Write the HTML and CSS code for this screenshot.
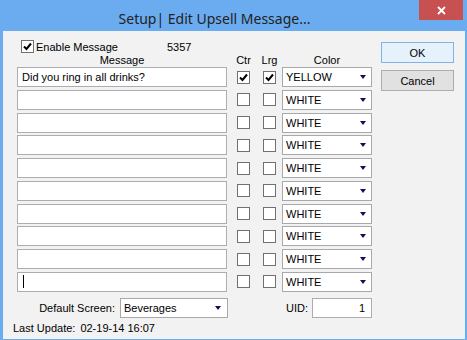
FILE: index.html
```html
<!DOCTYPE html>
<html>
<head>
  <title>Setup| Edit Upsell Message...</title>
  <link rel="stylesheet" href="styles.css">
</head>
<body>
<div class="window">
  <div class="titlebar">
    <div class="title">Setup| Edit Upsell Message...</div>
    <div class="close">
      <svg width="9" height="9" viewBox="0 0 9 9"><path d="M1 1 L8 8 M8 1 L1 8" stroke="#fff" stroke-width="1.8"/></svg>
    </div>
  </div>
  <div class="client">
    <div class="form">
      <div class="enable">
        <span class="chk checked"><svg width="11" height="11" viewBox="0 0 11 11"><path d="M2 5.5 L4.5 8 L9 2.5" fill="none" stroke="#000" stroke-width="2"/></svg></span>
        <span class="enable-label">Enable Message</span>
        <span>5357</span>
      </div>
      <div class="heads">
        <span class="col-msg">Message</span>
        <span class="col-ctr">Ctr</span>
        <span class="col-lrg">Lrg</span>
        <span class="col-color">Color</span>
      </div>
      <div class="rows">
        <div class="row">
          <div class="text col-msg">Did you ring in all drinks?</div>
          <span class="chk col-ctr"><svg width="11" height="11" viewBox="0 0 11 11"><path d="M2 5.5 L4.5 8 L9 2.5" fill="none" stroke="#000" stroke-width="2"/></svg></span>
          <span class="chk col-lrg"><svg width="11" height="11" viewBox="0 0 11 11"><path d="M2 5.5 L4.5 8 L9 2.5" fill="none" stroke="#000" stroke-width="2"/></svg></span>
          <div class="combo col-color">YELLOW<span class="arrow"></span></div>
        </div>
        <div class="row">
          <div class="text col-msg"></div>
          <span class="chk col-ctr"></span>
          <span class="chk col-lrg"></span>
          <div class="combo col-color">WHITE<span class="arrow"></span></div>
        </div>
        <div class="row">
          <div class="text col-msg"></div>
          <span class="chk col-ctr"></span>
          <span class="chk col-lrg"></span>
          <div class="combo col-color">WHITE<span class="arrow"></span></div>
        </div>
        <div class="row">
          <div class="text col-msg"></div>
          <span class="chk col-ctr"></span>
          <span class="chk col-lrg"></span>
          <div class="combo col-color">WHITE<span class="arrow"></span></div>
        </div>
        <div class="row">
          <div class="text col-msg"></div>
          <span class="chk col-ctr"></span>
          <span class="chk col-lrg"></span>
          <div class="combo col-color">WHITE<span class="arrow"></span></div>
        </div>
        <div class="row">
          <div class="text col-msg"></div>
          <span class="chk col-ctr"></span>
          <span class="chk col-lrg"></span>
          <div class="combo col-color">WHITE<span class="arrow"></span></div>
        </div>
        <div class="row">
          <div class="text col-msg"></div>
          <span class="chk col-ctr"></span>
          <span class="chk col-lrg"></span>
          <div class="combo col-color">WHITE<span class="arrow"></span></div>
        </div>
        <div class="row">
          <div class="text col-msg"></div>
          <span class="chk col-ctr"></span>
          <span class="chk col-lrg"></span>
          <div class="combo col-color">WHITE<span class="arrow"></span></div>
        </div>
        <div class="row">
          <div class="text col-msg"></div>
          <span class="chk col-ctr"></span>
          <span class="chk col-lrg"></span>
          <div class="combo col-color">WHITE<span class="arrow"></span></div>
        </div>
        <div class="row">
          <div class="text col-msg"><span class="caret"></span></div>
          <span class="chk col-ctr"></span>
          <span class="chk col-lrg"></span>
          <div class="combo col-color">WHITE<span class="arrow"></span></div>
        </div>
      </div>
      <div class="bottom">
        <span class="screen-label">Default Screen:</span>
        <div class="combo screen">Beverages<span class="arrow"></span></div>
        <div class="uid">
          <span class="uid-label">UID:</span>
          <div class="text uid-box">1</div>
        </div>
      </div>
      <div class="updated">Last Update:<span class="stamp">02-19-14 16:07</span></div>
    </div>
    <div class="buttons">
      <div class="btn ok">OK</div>
      <div class="btn">Cancel</div>
    </div>
  </div>
</div>
</body>
</html>
```

FILE: styles.css
```css
body {
    margin: 0;
    font-family: "Liberation Sans", Arial, sans-serif;
    font-size: 11px;
    color: #000;
}

.window {
    width: 467px;
    height: 340px;
    background-color: #6babf0;
    display: flex;
    flex-direction: column;
}

.titlebar {
    height: 31px;
    display: flex;
    flex-shrink: 0;
}

.title {
    flex: 1;
    padding-left: 10px;
    text-align: center;
    font-family: "Noto Sans", sans-serif;
    font-size: 14px;
    line-height: 38px;
    height: 31px;
    color: #222;
}

.close {
    width: 44px;
    height: 20px;
    margin-right: 4px;
    background-color: #c75050;
    display: flex;
    align-items: center;
    justify-content: center;
}

.client {
    flex: 1;
    margin: 0 2px 1px 3px;
    background-color: #f2f2f2;
    display: flex;
    padding-left: 14px;
}

.form {
    width: 355px;
}

.enable {
    display: flex;
    align-items: center;
    margin-top: 9px;
    padding-left: 4px;
    height: 13px;
}

.enable-label {
    width: 131px;
    margin-left: 2px;
}

.chk {
    width: 11px;
    height: 11px;
    border: 1px solid #707070;
    background-color: #fff;
    display: flex;
    align-items: center;
    justify-content: center;
    flex-shrink: 0;
}

.heads {
    display: flex;
    height: 14px;
    line-height: 14px;
}

.heads span {
    display: flex;
    justify-content: center;
    white-space: nowrap;
}

.col-msg {
    width: 210px;
    box-sizing: border-box;
}

.col-ctr {
    margin-left: 10px;
}

.col-lrg {
    margin-left: 13px;
}

.heads .col-ctr,
.heads .col-lrg {
    width: 13px;
}

.col-color {
    margin-left: 6px;
    width: 90px;
    box-sizing: border-box;
}

.rows {
    display: flex;
    flex-direction: column;
    gap: 2.75px;
}

.row {
    display: flex;
    align-items: center;
    height: 20px;
}

.text {
    height: 20px;
    border: 1px solid #abadb3;
    background-color: #fff;
    padding-left: 4px;
    line-height: 18px;
    box-sizing: border-box;
    display: flex;
    align-items: center;
}

.caret {
    width: 1px;
    height: 13px;
    background-color: #000;
    margin-left: 1px;
}

.combo {
    height: 20px;
    border: 1px solid #a9a9a9;
    background-color: #fff;
    padding-left: 3px;
    padding-right: 5px;
    box-sizing: border-box;
    display: flex;
    align-items: center;
    justify-content: space-between;
}

.arrow {
    width: 0;
    height: 0;
    border-left: 3.5px solid transparent;
    border-right: 3.5px solid transparent;
    border-top: 4px solid #10105a;
}

.bottom {
    display: flex;
    align-items: center;
    margin-top: 6px;
    height: 20px;
}

.screen-label {
    width: 98px;
    margin-right: 5px;
    text-align: right;
}

.screen {
    width: 108px;
    padding-right: 6px;
}

.uid {
    margin-left: auto;
    display: flex;
    align-items: center;
}

.uid-label {
    margin-right: 4px;
}

.uid-box {
    width: 60px;
    justify-content: flex-end;
    padding-right: 6px;
}

.updated {
    margin-top: 4px;
    margin-left: -4px;
    line-height: 13px;
}

.stamp {
    margin-left: 5px;
}

.buttons {
    margin-left: 9px;
    padding-top: 11px;
    display: flex;
    flex-direction: column;
    gap: 7px;
}

.btn {
    width: 73px;
    height: 21px;
    box-sizing: border-box;
    border: 1px solid #adadad;
    background-color: #e1e1e1;
    display: flex;
    align-items: center;
    justify-content: center;
}

.btn.ok {
    border-color: #7eb4ea;
    background-color: #e5f1fb;
}
```
